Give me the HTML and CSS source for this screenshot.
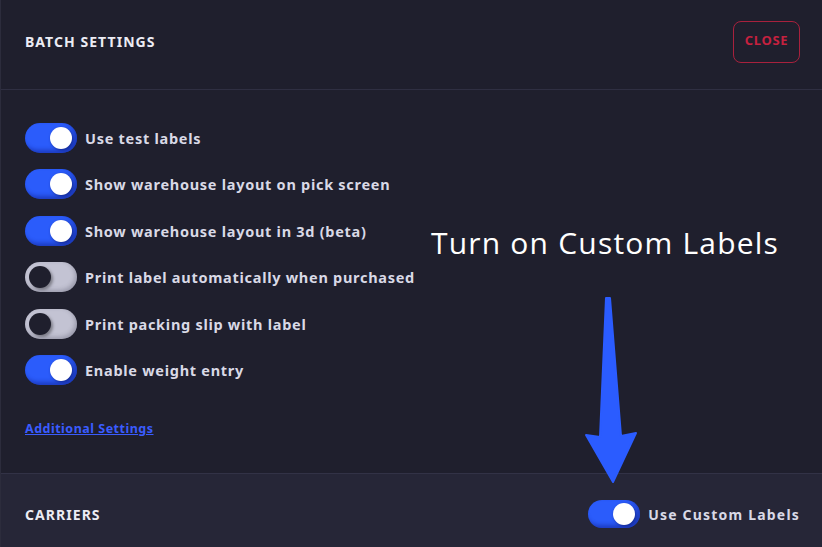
FILE: index.html
```html
<!DOCTYPE html>
<html>
<head>
<meta charset="utf-8">
<link rel="stylesheet" href="styles.css">
</head>
<body>
<div class="panel">
  <header class="head">
    <h2 class="title">BATCH SETTINGS</h2>
    <button class="close">CLOSE</button>
  </header>
  <section class="body">
    <ul class="opts">
      <li class="opt"><span class="tg on"><span class="knob"></span></span><span class="lbl">Use test labels</span></li>
      <li class="opt"><span class="tg on"><span class="knob"></span></span><span class="lbl">Show warehouse layout on pick screen</span></li>
      <li class="opt"><span class="tg on"><span class="knob"></span></span><span class="lbl">Show warehouse layout in 3d (beta)</span></li>
      <li class="opt"><span class="tg off"><span class="knob"></span></span><span class="lbl">Print label automatically when purchased</span></li>
      <li class="opt"><span class="tg off"><span class="knob"></span></span><span class="lbl">Print packing slip with label</span></li>
      <li class="opt"><span class="tg on"><span class="knob"></span></span><span class="lbl">Enable weight entry</span></li>
    </ul>
    <a class="more" href="#">Additional Settings</a>
  </section>
  <footer class="foot">
    <h3 class="title">CARRIERS</h3>
    <div class="opt">
      <span class="tg on"><span class="knob"></span></span><span class="lbl cond">Use Custom Labels</span>
    </div>
  </footer>
  <div class="note">Turn on Custom Labels</div>
  <svg class="arrow" width="822" height="547" viewBox="0 0 822 547">
    <polygon points="606,298 610,298 621,436 636,433 613,482 586,435 600,437" fill="#2b5cff" stroke="#2b5cff" stroke-width="2" stroke-linejoin="round"/>
  </svg>
</div>
</body>
</html>
```
FILE: styles.css
```css
* { box-sizing: border-box; }
html, body { margin: 0; padding: 0; }
body {
  width: 822px; height: 547px; overflow: hidden;
  background: #1f1f2d;
  font-family: "Noto Sans", "Open Sans", sans-serif;
  color: #dcdce8;
}
.panel {
  position: relative;
  width: 822px; height: 547px;
  display: flex; flex-direction: column;
  border-left: 1px solid #2c2c3c;
}
.head {
  height: 90px;
  display: flex; align-items: center; justify-content: space-between;
  padding: 0 22px 6px 24px;
  border-bottom: 1px solid #2f2f42;
}
.title {
  margin: 0;
  font-size: 14px; font-weight: 700;
  letter-spacing: 1.05px;
  color: #ececf4;
}
.close {
  width: 67px; height: 42px;
  background: transparent;
  border: 1.5px solid #a8213d;
  border-radius: 8px;
  color: #c6213f;
  font-family: inherit;
  font-size: 13px; font-weight: 700;
  letter-spacing: 0.7px;
  padding: 0 0 4px;
}
.body {
  flex: 1;
  padding: 33px 24px 0;
}
.opts { list-style: none; margin: 0; padding: 0; display: flex; flex-direction: column; gap: 16.4px; }
.opt { display: flex; align-items: center; gap: 8px; height: 30px; }
.tg {
  position: relative;
  width: 52px; height: 30px;
  border-radius: 15px;
  flex: none;
}
.tg .knob {
  position: absolute; top: 4px;
  width: 22px; height: 22px; border-radius: 50%;
}
.tg.on { background: #2b5cfb; box-shadow: inset -3px -3px 4px rgba(10,20,120,0.45); }
.tg.on .knob { left: 25px; background: #fff; box-shadow: 1px 1px 3px rgba(0,0,60,0.5); }
.tg.off { background: #c3c3d3; box-shadow: inset -2px -2px 4px rgba(60,60,80,0.3); }
.tg.off .knob { left: 4px; background: #1f1f2d; box-shadow: 2px 2px 3px rgba(0,0,0,0.35); }
.lbl { font-size: 14.5px; font-weight: 700; color: #d9d9e6; letter-spacing: 0.72px; }
.more {
  display: inline-block;
  margin-top: 35px;
  font-size: 12.5px; font-weight: 700;
  letter-spacing: 0.5px;
  color: #3a5cff;
  text-decoration: underline;
}
.foot {
  height: 74px;
  background: #262637;
  border-top: 1px solid #323246;
  display: flex; align-items: center; justify-content: space-between;
  padding: 7px 22px 0 24px;
}
.foot .opt { height: 28px; }
.foot .tg { height: 28px; }
.foot .tg .knob { top: 3px; }
.cond { font-size: 14px; letter-spacing: 1.2px; }
.note {
  position: absolute; left: 430px; top: 222px;
  font-family: "Open Sans", sans-serif;
  font-size: 30px; font-weight: 400;
  color: #ffffff;
  letter-spacing: 1.2px;
}
.arrow { position: absolute; left: -1px; top: 0; pointer-events: none; }
```
